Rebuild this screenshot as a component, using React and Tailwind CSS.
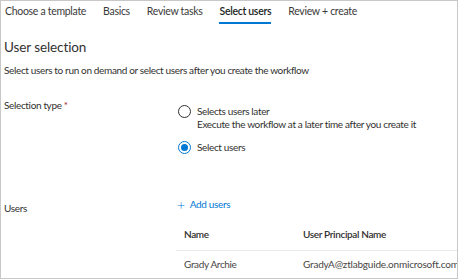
const TABS = ['Choose a template', 'Basics', 'Review tasks', 'Select users', 'Review + create']

function Radio({ checked }) {
  return (
    <span
      className={
        'flex h-[13px] w-[13px] shrink-0 items-center justify-center rounded-full border bg-white ' +
        (checked ? 'border-[#0078d4]' : 'border-[#323130]')
      }
    >
      {checked && <span className="h-[7px] w-[7px] rounded-full bg-[#0078d4]" />}
    </span>
  )
}

export default function App() {
  return (
    <div
      className="h-[279px] w-[458px] overflow-hidden border border-[#c8c8c8] bg-white text-[#323130]"
      style={{ fontFamily: 'Lato, "Noto Sans", sans-serif' }}
    >
      <div className="flex h-[24px] items-start gap-[17px] pl-[4px] pt-[3px] text-[10.5px] tracking-[-0.3px]">
        {TABS.map((t) => (
          <div
            key={t}
            className={
              t === 'Select users'
                ? 'border-b-2 border-[#0078d4] pb-[2px] font-semibold text-[#201f1e]'
                : 'pb-[2px] text-[#3b3a39]'
            }
          >
            {t}
          </div>
        ))}
      </div>

      <h2 className="mt-[12px] pl-[3px] text-[13.5px] font-normal leading-[20px] tracking-[-0.1px]">User selection</h2>

      <div className="text-[10px] leading-[13px] tracking-[-0.35px]">
        <p className="mt-[7px] pl-[3px]">
          Select users to run on demand or select users after you create the workflow
        </p>

        <div className="mt-[22px] grid grid-cols-[175px_1fr]">
          <div className="pl-[3px]">
            Selection type <span className="text-[#a4262c]">*</span>
          </div>
          <div className="flex flex-col gap-[10px] pl-[2px] pt-[6px]">
            <div className="flex items-start gap-[6px]">
              <Radio />
              <div>
                <div>Selects users later</div>
                <div>Execute the workflow at a later time after you create it</div>
              </div>
            </div>
            <div className="flex items-center gap-[6px]">
              <Radio checked />
              <div>Select users</div>
            </div>
          </div>
        </div>

        <div className="mt-[44px] grid grid-cols-[175px_1fr]">
          <div className="pl-[3px] pt-[4px]">Users</div>
          <div className="min-w-0">
            <div className="flex items-center gap-[5px] pl-[1px] text-[#0078d4]">
              <span className="text-[14px] font-light leading-[13px]">+</span>
              <span>Add users</span>
            </div>
            <div className="mt-[17px] grid grid-cols-[119px_1fr] border-b border-[#edebe9] pb-[9px] pl-[8px] font-semibold">
              <div>Name</div>
              <div>User Principal Name</div>
            </div>
            <div className="grid grid-cols-[119px_1fr] pl-[8px] pt-[7px] text-[#484644]">
              <div>Grady Archie</div>
              <div className="whitespace-nowrap tracking-[-0.2px]">GradyA@ztlabguide.onmicrosoft.com</div>
            </div>
          </div>
        </div>
      </div>
    </div>
  )
}
